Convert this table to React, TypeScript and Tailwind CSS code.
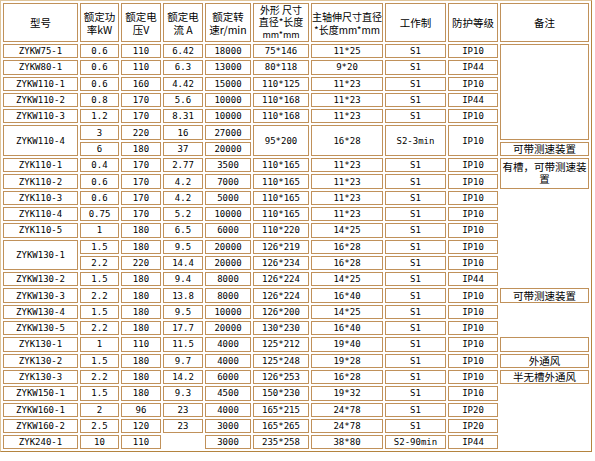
import React from "react";

type C = { t?: React.ReactNode; rs?: number; hide?: boolean; cjk?: boolean };

const rowsData: C[][] = [];
const s = (t: string): C => ({ t });
const H: C = { hide: true };
const line = (arr: string[]): C[] => arr.map(s);

rowsData.push([...line(["ZYKW75-1", "0.6", "110", "6.42", "18000", "75*146", "11*25", "S1", "IP10"]), { t: "\u00a0", rs: 6 }]);
rowsData.push(line(["ZYKW80-1", "0.6", "110", "6.3", "13000", "80*118", "9*20", "S1", "IP44"]));
rowsData.push(line(["ZYKW110-1", "0.6", "160", "4.42", "15000", "110*125", "11*23", "S1", "IP10"]));
rowsData.push(line(["ZYKW110-2", "0.8", "170", "5.6", "10000", "110*168", "11*23", "S1", "IP44"]));
rowsData.push(line(["ZYKW110-3", "1.2", "170", "8.31", "10000", "110*168", "11*23", "S1", "IP10"]));
rowsData.push([
  { t: "ZYKW110-4", rs: 2 },
  ...line(["3", "220", "16", "27000"]),
  { t: "95*200", rs: 2 },
  { t: "16*28", rs: 2 },
  { t: "S2-3min", rs: 2 },
  { t: "IP10", rs: 2 },
]);
rowsData.push([...line(["6", "180", "37", "20000"]), { t: "可带测速装置", cjk: true }]);
rowsData.push([...line(["ZYK110-1", "0.4", "170", "2.77", "3500", "110*165", "11*23", "S1", "IP10"]), { t: "有槽，可带测速装置", rs: 2, cjk: true }]);
rowsData.push(line(["ZYK110-2", "0.6", "170", "4.2", "7000", "110*165", "11*23", "S1", "IP10"]));
rowsData.push([...line(["ZYK110-3", "0.6", "170", "4.2", "5000", "110*165", "11*23", "S1", "IP10"]), H]);
rowsData.push([...line(["ZYK110-4", "0.75", "170", "5.2", "10000", "110*165", "11*23", "S1", "IP10"]), H]);
rowsData.push([...line(["ZYK110-5", "1", "180", "6.5", "6000", "110*220", "14*25", "S1", "IP10"]), H]);
rowsData.push([{ t: "ZYKW130-1", rs: 2 }, ...line(["1.5", "180", "9.5", "20000", "126*219", "16*28", "S1", "IP10"]), H]);
rowsData.push([...line(["2.2", "220", "14.4", "20000", "126*234", "16*28", "S1", "IP10"]), H]);
rowsData.push([...line(["ZYKW130-2", "1.5", "180", "9.4", "8000", "126*224", "14*25", "S1", "IP44"]), H]);
rowsData.push([...line(["ZYKW130-3", "2.2", "180", "13.8", "8000", "126*224", "16*40", "S1", "IP10"]), { t: "可带测速装置", cjk: true }]);
rowsData.push([...line(["ZYKW130-4", "1.5", "180", "9.5", "10000", "126*200", "14*25", "S1", "IP10"]), H]);
rowsData.push([...line(["ZYKW130-5", "2.2", "180", "17.7", "20000", "130*230", "16*40", "S1", "IP10"]), H]);
rowsData.push([...line(["ZYK130-1", "1", "110", "11.5", "4000", "125*212", "19*40", "S1", "IP10"]), { t: "\u00a0" }]);
rowsData.push([...line(["ZYK130-2", "1.5", "180", "9.7", "4000", "125*248", "19*28", "S1", "IP10"]), { t: "外通风", cjk: true }]);
rowsData.push([...line(["ZYK130-3", "2.2", "180", "14.2", "6000", "126*253", "16*28", "S1", "IP10"]), { t: "半无槽外通风", cjk: true }]);
rowsData.push([...line(["ZYKW150-1", "1.5", "180", "9.3", "4500", "150*230", "19*32", "S1", "IP10"]), H]);
rowsData.push([...line(["ZYKW160-1", "2", "96", "23", "4000", "165*215", "24*78", "S1", "IP20"]), H]);
rowsData.push([...line(["ZYKW160-2", "2.5", "120", "23", "3000", "165*265", "24*78", "S1", "IP20"]), H]);
rowsData.push([
  ...line(["ZYK240-1", "10", "110"]),
  H,
  ...line(["3000", "235*258", "38*80", "S2-90min", "IP44"]),
  H,
]);

const widths = [75, 39, 40, 40, 46, 56, 72, 61, 50, 89];

function Hd({ children, cls = "leading-[13px]" }: { children: React.ReactNode; cls?: string }) {
  return (
    <td
      className={
        "border border-[#c0915a] p-0 text-center align-middle text-[10.5px] whitespace-nowrap font-['Noto_Sans_CJK_SC',sans-serif] text-black " +
        cls
      }
    >
      {children}
    </td>
  );
}

export default function App() {
  return (
    <div className="w-[595px] h-[461px] bg-white">
      <table className="table-fixed border-separate border-spacing-[2px] w-[592px] bg-white border border-t-[#e0c59a] border-l-[#e0c59a] border-b-[#b4843f] border-r-[#b4843f] font-['DejaVu_Sans_Mono','Noto_Sans_CJK_SC',monospace] text-[9px] text-black">
        <colgroup>
          {widths.map((w, i) => (
            <col key={i} style={{ width: w }} />
          ))}
        </colgroup>
        <tbody>
          <tr className="h-[38px]">
            <Hd>型号</Hd>
            <Hd>额定功<br />率kW</Hd>
            <Hd>额定电<br />压V</Hd>
            <Hd>额定电<br />流 A</Hd>
            <Hd>额定转<br />速r/min</Hd>
            <Hd cls="leading-[12px] text-[10px]">外形&nbsp;尺寸<br />直径*长度<br /><span className="text-[9px]">mm*mm</span></Hd>
            <Hd cls="leading-[13px] text-[10px]">主轴伸尺寸直径<br />*长度mm*mm</Hd>
            <Hd>工作制</Hd>
            <Hd>防护等级</Hd>
            <Hd>备注</Hd>
          </tr>
          {rowsData.map((r, i) => (
            <tr key={i} className="h-[14.3px]">
              {r.map((c, j) => (
                <td
                  key={j}
                  rowSpan={c.rs}
                  className={
                    c.hide
                      ? "border border-transparent p-0"
                      : c.cjk
                      ? "border border-[#c0915a] p-0 text-center align-middle text-[10.5px] leading-[12px] font-['Noto_Sans_CJK_SC',sans-serif]"
                      : "border border-[#c0915a] p-0 text-center align-middle leading-[12px] whitespace-nowrap"
                  }
                >
                  {c.hide ? null : c.t}
                </td>
              ))}
            </tr>
          ))}
        </tbody>
      </table>
    </div>
  );
}
